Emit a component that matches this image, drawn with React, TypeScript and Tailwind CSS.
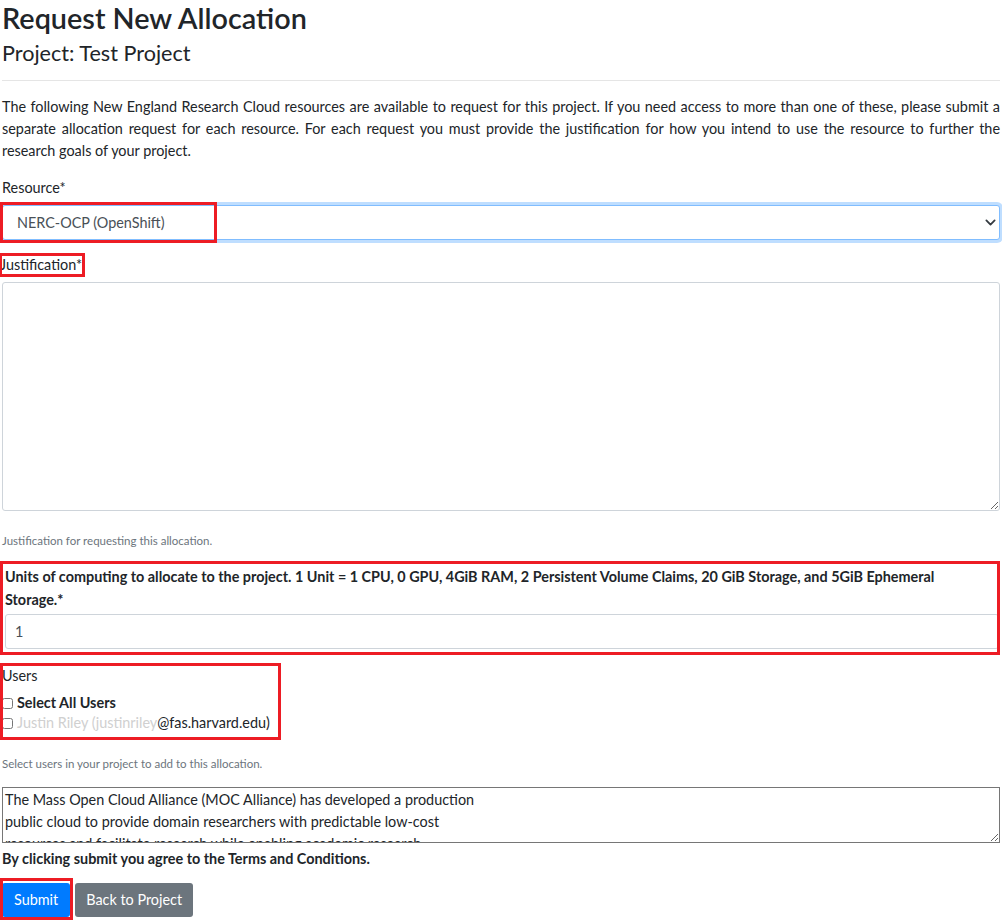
import React from 'react';

const TERMS = `The Mass Open Cloud Alliance (MOC Alliance) has developed a production
public cloud to provide domain researchers with predictable low-cost
resources and facilitate research while enabling academic research
in cloud computing and related areas.`;

function RedBox({ className }: { className: string }) {
  return <div className={`pointer-events-none absolute border-[3px] border-[#ed1c24] ${className}`} />;
}

export default function App() {
  return (
    <div className="min-h-[922px] bg-white px-[2px] text-[14.4px] leading-[21.6px] text-[#212529] font-['Lato',sans-serif]">
      <h2 className="pt-[1px] text-[28.8px] leading-[34px] font-semibold">Request New Allocation</h2>
      <h4 className="mt-[5px] text-[21.6px] leading-[26px] font-normal">Project: Test Project</h4>

      <hr className="mt-[14px] border-t border-[#e5e5e5]" />

      {/* intro */}
      <div className="mt-[15px] leading-[22px]">
        <div className="whitespace-nowrap text-justify [text-align-last:justify]">
          The following New England Research Cloud resources are available to request for this project. If you need access to more than one of these, please submit a
        </div>
        <div className="whitespace-nowrap text-justify [text-align-last:justify]">
          separate allocation request for each resource. For each request you must provide the justification for how you intend to use the resource to further the
        </div>
        <div>research goals of your project.</div>
      </div>

      {/* resource */}
      <div className="mt-[15px]">
        <label className="block leading-[22px]">Resource*</label>
        <div className="relative mt-[6px]">
          <select
            defaultValue="ocp"
            className="h-[35px] w-full appearance-none rounded-[3px] border border-[#80bdff] bg-white pl-[14px] pr-8 text-[14.4px] text-[#495057] shadow-[0_0_0_3px_rgba(0,123,255,0.25)] outline-none"
          >
            <option value="ocp">NERC-OCP (OpenShift)</option>
          </select>
          <svg className="pointer-events-none absolute right-[4px] top-[12px]" width="11" height="11" viewBox="0 0 16 16">
            <path d="M2 5l6 6 6-6" fill="none" stroke="#343a40" strokeWidth="2.6" strokeLinecap="round" strokeLinejoin="round" />
          </svg>
          <RedBox className="-left-[2px] -top-[3px] h-[41px] w-[217px]" />
        </div>
      </div>

      {/* justification */}
      <div className="mt-[14px]">
        <label className="relative inline-block leading-[22px] -ml-[2px]">
          Justification*
          <RedBox className="-left-[1px] -top-[1px] -right-[3px] -bottom-[1px]" />
        </label>
        <textarea className="mt-[6px] block h-[229px] w-full resize-y rounded-[3px] border border-[#ced4da] bg-white outline-none" />
        <small className="mt-[21px] block text-[11.5px] leading-[17px] text-[#6c757d]">
          Justification for requesting this allocation.
        </small>
      </div>

      {/* units */}
      <div className="relative mt-[12px] pl-[3px] pr-[1px] pt-[4px] pb-[6px]">
        <label className="block font-bold leading-[23px]">
          Units of computing to allocate to the project. 1 Unit = 1 CPU, 0 GPU, 4GiB RAM, 2 Persistent Volume Claims, 20 GiB Storage, and 5GiB Ephemeral
          <br />
          Storage.*
        </label>
        <input
          type="text"
          defaultValue="1"
          className="mt-[3px] block h-[35px] w-full rounded-[3px] border border-[#ced4da] pl-[9px] text-[14.4px] text-[#495057] outline-none"
        />
        <RedBox className="-left-[2px] top-0 right-0 bottom-0" />
      </div>

      {/* users */}
      <div className="mt-[11px]">
        <div className="relative inline-block w-[281px] -ml-[2px] pl-[2px] pt-[0px] pb-[8px]">
          <div className="leading-[20px]">Users</div>
          <label className="mt-[8px] flex items-center gap-[4px] font-bold leading-[18px]">
            <input type="checkbox" className="m-0 h-[11px] w-[11px]" />
            Select All Users
          </label>
          <label className="mt-[2px] flex items-center gap-[4px] whitespace-nowrap leading-[18px]">
            <input type="checkbox" className="m-0 h-[11px] w-[11px]" />
            <span className="text-[#d0d0d0]">Justin Riley (justinriley</span>
            <span className="-ml-[4px]">@fas.harvard.edu)</span>
          </label>
          <RedBox className="left-0 top-[-3px] right-0 bottom-0" />
        </div>
        <small className="mt-[15px] block text-[11.5px] leading-[17px] text-[#6c757d]">
          Select users in your project to add to this allocation.
        </small>
      </div>

      {/* terms */}
      <textarea
        readOnly
        value={TERMS}
        rows={3}
        className="mt-[15px] block h-[56px] w-full resize-y overflow-y-scroll border border-[#767676] px-[2px] py-[1px] text-[14.4px] leading-[22px] text-[#212529] outline-none"
      />
      <p className="mt-[5px] font-bold leading-[22px]">By clicking submit you agree to the Terms and Conditions.</p>

      <div className="mt-[13px] flex gap-[5px]">
        <div className="relative">
          <button className="h-[34px] rounded-[3px] bg-[#007bff] px-[12px] text-[14.4px] text-white">Submit</button>
          <RedBox className="-left-[2px] -top-[5px] -right-[3px] -bottom-[3px]" />
        </div>
        <button className="h-[34px] rounded-[3px] bg-[#6c757d] px-[11px] text-[14.4px] text-white">Back to Project</button>
      </div>
    </div>
  );
}
